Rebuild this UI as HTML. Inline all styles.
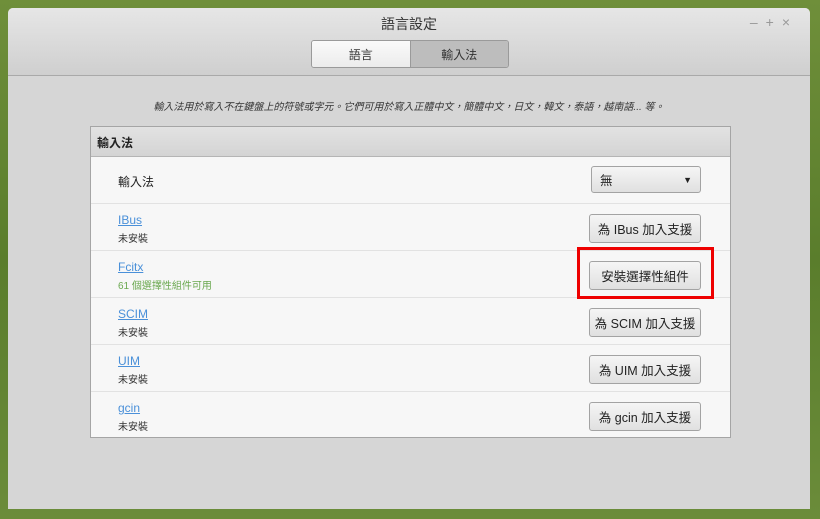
<!DOCTYPE html>
<html><head><meta charset="utf-8"><style>
*{box-sizing:border-box;margin:0;padding:0}
body{width:820px;height:519px;overflow:hidden;background:linear-gradient(180deg,#6f8f3a,#5a7d2c 50%,#6b8c3a);font-family:"Liberation Sans","Noto Sans CJK TC",sans-serif;position:relative}
.win{position:absolute;left:8px;top:8px;width:802px;height:501px;background:#d6d6d6;border-radius:5px 5px 0 0;overflow:hidden}
.hdr{height:68px;background:linear-gradient(#e6e6e6,#cfcfcf);border-bottom:1px solid #a9a9a9;position:relative}
.title{position:absolute;top:6px;width:100%;text-align:center;font-size:14px;color:#333}
.ctl{position:absolute;right:12px;top:6px;color:#999;font-size:14px;letter-spacing:8px}
.tabs{position:absolute;left:303px;top:32px;width:198px;height:28px;border:1px solid #9a9a9a;border-radius:3px;display:flex;overflow:hidden;font-size:12px;color:#333}
.tabs div{flex:1;display:flex;align-items:center;justify-content:center}
.t1{background:linear-gradient(#fafafa,#ececec);border-right:1px solid #9a9a9a}
.t2{background:#bdbdbd}
.desc{position:absolute;top:90px;width:100%;text-align:center;font-size:10px;color:#333;font-style:italic}
.tbl{position:absolute;left:82px;top:118px;width:641px;height:312px;border:1px solid #a5a5a5;background:#f7f7f7}
.th{height:30px;background:linear-gradient(#e2e2e2,#d4d4d4);border-bottom:1px solid #b5b5b5;font-size:12px;font-weight:bold;color:#222;padding:7px 6px}
.row{height:47px;border-bottom:1px solid #e2e2e2;position:relative}
.row:last-child{border-bottom:none}
.nm{position:absolute;left:27px;top:9px;font-size:12px;color:#4a90d9;text-decoration:underline}
.st{position:absolute;left:27px;top:26px;font-size:10px;color:#333}
.btn{position:absolute;left:498px;top:10px;width:112px;height:29px;border:1px solid #a3a3a3;border-radius:3px;background:linear-gradient(#f5f5f5,#e0e0e0);font-size:12.5px;color:#222;display:flex;align-items:center;justify-content:center}
.red{position:absolute;left:577px;top:247px;width:137px;height:52px;border:3px solid #e00;}
</style></head><body>
<div class="win">
<div class="hdr"><div class="title">語言設定</div><div class="ctl">‒+×</div>
<div class="tabs"><div class="t1">語言</div><div class="t2">輸入法</div></div></div>
<div class="desc">輸入法用於寫入不在鍵盤上的符號或字元。它們可用於寫入正體中文，簡體中文，日文，韓文，泰語，越南語... 等。</div>
<div class="tbl">
<div class="th">輸入法</div>
<div class="row"><div style="position:absolute;left:27px;top:16px;font-size:12px;color:#222">輸入法</div>
<div class="btn" style="left:500px;top:9px;width:110px;height:27px;justify-content:space-between;padding:0 8px">無<span style="font-size:9px">▼</span></div></div>
<div class="row"><div class="nm">IBus</div><div class="st">未安裝</div><div class="btn">為 IBus 加入支援</div></div>
<div class="row"><div class="nm">Fcitx</div><div class="st" style="color:#6aa84f">61 個選擇性組件可用</div><div class="btn">安裝選擇性組件</div></div>
<div class="row"><div class="nm">SCIM</div><div class="st">未安裝</div><div class="btn">為 SCIM 加入支援</div></div>
<div class="row"><div class="nm">UIM</div><div class="st">未安裝</div><div class="btn">為 UIM 加入支援</div></div>
<div class="row"><div class="nm">gcin</div><div class="st">未安裝</div><div class="btn">為 gcin 加入支援</div></div>
</div>
</div>
<div class="red"></div>
</body></html>
